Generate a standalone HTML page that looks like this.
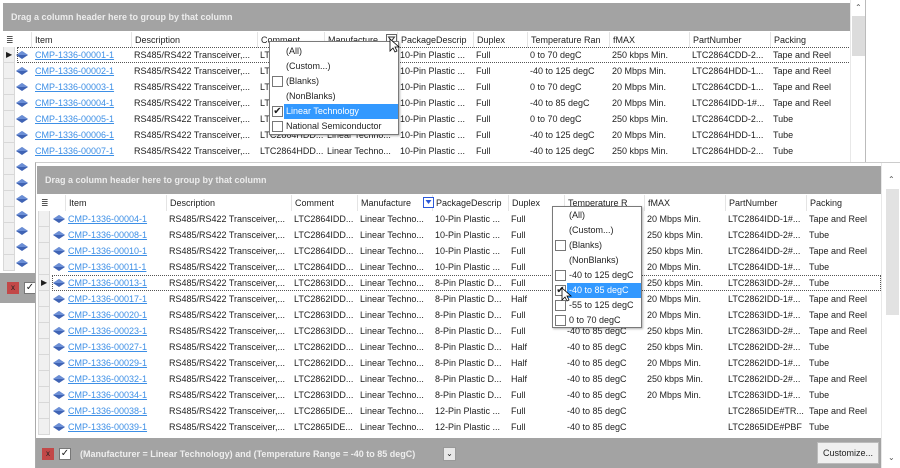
<!DOCTYPE html>
<html><head><meta charset="utf-8"><style>
*{margin:0;padding:0;box-sizing:border-box}
body{width:900px;height:468px;background:#fff;position:relative;overflow:hidden;font-family:"Liberation Sans",sans-serif;font-size:9px;color:#1e1e1e}
.w{position:absolute;background:#fff;overflow:hidden}
.gp{position:absolute;background:#a3a3a3;color:#ececec;font-weight:bold;font-size:9px;padding-left:8px}
.hd,.r{position:absolute;left:0;right:0;height:16px;line-height:16px;white-space:nowrap}
.hd span,.r span,.r a{position:absolute;top:0}
.hd span{border-left:1px solid #e4e4e4;padding-left:3px;height:16px}
.r a{color:#3d8fe6;text-decoration:underline}
.ri{position:absolute;width:12px;height:16px;background:#f0f0f0;border:1px solid #d8d8d8;border-top:none}
.d{position:absolute;top:4px;width:12px;height:8px}
.ft{position:absolute;background:#a3a3a3}
.sb{position:absolute;background:#fff;border-left:1px solid #e8e8e8}
.pop{position:absolute;background:#fff;border:1px solid #7a7a7a;box-shadow:1px 1px 2px rgba(0,0,0,.3)}
.pop div{position:absolute;left:0;right:0;height:15px;line-height:15px;white-space:nowrap}
.pop .cb{position:absolute;width:11px;height:11px;border:1px solid #777;background:#fff;top:2px}
.sel{position:absolute;border:1px dotted #555}
</style></head><body>

<!-- BACK WINDOW -->
<div class="w" style="left:0;top:0;width:866px;height:303px;border-right:1px solid #bbb">
 <div class="gp" style="left:3px;top:3px;width:847px;height:28px;line-height:28px">Drag a column header here to group by that column</div>
 <div class="hd" style="top:32px;width:850px">
  <span style="left:3px;border:none;color:#555">&#8803;</span>
  <span style="left:31px">Item</span><span style="left:131px">Description</span><span style="left:257px">Comment</span><span style="left:324px">Manufacture</span><span style="left:397px">PackageDescrip</span><span style="left:473px">Duplex</span><span style="left:527px">Temperature Ran</span><span style="left:609px">fMAX</span><span style="left:689px">PartNumber</span><span style="left:770px">Packing</span>
 </div>
 <svg style="position:absolute;left:386px;top:34px" width="11" height="11"><rect x=".5" y=".5" width="10" height="10" fill="#fff" stroke="#666"/><path d="M2.5 3h6l-3 4z" fill="none" stroke="#333"/></svg>
 <div id="bk"></div>
 <div class="ft" style="left:0;top:273px;width:866px;height:30px">
  <div style="position:absolute;left:7px;top:9px;width:12px;height:12px;background:#c24848;color:#222;font-size:8px;text-align:center;line-height:12px">x</div>
  <div style="position:absolute;left:24px;top:9px;width:12px;height:12px;background:#fff;border:1px solid #777;font-size:10px;line-height:10px;text-align:center">&#10003;</div>
 </div>
 <div class="sb" style="left:850px;top:0;width:16px;height:162px"><div style="position:absolute;top:3px;left:4px;color:#555;font-size:8px">&#8963;</div><div style="position:absolute;top:16px;left:1px;width:13px;height:40px;background:#dcdcdc"></div></div>
</div>

<!-- BACK POPUP -->
<div class="pop" style="left:269px;top:41px;width:130px;height:94px">
 <div style="top:2px;padding-left:16px">(All)</div>
 <div style="top:17px;padding-left:16px">(Custom...)</div>
 <div style="top:32px;padding-left:16px"><i class="cb" style="left:2px"></i>(Blanks)</div>
 <div style="top:47px;padding-left:16px">(NonBlanks)</div>
 <div style="top:62px;padding-left:16px"><i class="cb" style="left:2px;font-style:normal;font-size:10px;line-height:9px;text-align:center">&#10004;</i><span style="display:block;background:#3399ff;color:#fff;padding-left:2px;margin-left:-2px">Linear Technology</span></div>
 <div style="top:77px;padding-left:16px"><i class="cb" style="left:2px"></i>National Semiconductor</div>
</div>
<svg style="position:absolute;left:389px;top:38px" width="12" height="16"><path d="M1 1v12l3-3 2 4 2-1-2-4h4z" fill="#fff" stroke="#000" stroke-width=".8"/></svg>

<!-- FRONT WINDOW -->
<div class="w" style="left:35px;top:162px;width:865px;height:306px;border-left:1px solid #aaa;border-top:1px solid #ccc">
 <div class="gp" style="left:1px;top:3px;width:844px;height:28px;line-height:28px">Drag a column header here to group by that column</div>
 <div class="hd" style="top:32px;width:845px">
  <span style="left:2px;border:none;color:#555">&#8803;</span>
  <span style="left:29px">Item</span><span style="left:130px">Description</span><span style="left:255px">Comment</span><span style="left:321px">Manufacture</span><span style="left:396px">PackageDescrip</span><span style="left:472px">Duplex</span><span style="left:528px">Temperature R</span><span style="left:608px">fMAX</span><span style="left:689px">PartNumber</span><span style="left:770px">Packing</span>
 </div>
 <svg style="position:absolute;left:387px;top:34px" width="11" height="11"><rect x=".5" y=".5" width="10" height="10" fill="#fff" stroke="#2b58d8"/><path d="M2.5 3h6l-3 4z" fill="#2b58d8"/></svg>
 <div id="fr"></div>
 <div class="ft" style="left:0;top:275px;width:845px;height:31px">
  <div style="position:absolute;left:6px;top:10px;width:12px;height:12px;background:#c24848;color:#222;font-size:8px;text-align:center;line-height:12px">x</div>
  <div style="position:absolute;left:23px;top:10px;width:12px;height:12px;background:#fff;border:1px solid #777;font-size:10px;line-height:10px;text-align:center">&#10003;</div>
  <div style="position:absolute;left:44px;top:10px;color:#eee;font-weight:bold;font-size:9px;line-height:12px">(Manufacturer = Linear Technology) and (Temperature Range = -40 to 85 degC)</div>
  <div style="position:absolute;left:407px;top:9px;width:13px;height:14px;background:#e8e8e8;border:1px solid #999;font-size:8px;text-align:center;line-height:12px">&#8964;</div>
  <div style="position:absolute;left:781px;top:4px;width:62px;height:22px;background:#f0f0f0;border:1px solid #bbb;text-align:center;line-height:20px;font-size:9px">Customize...</div>
 </div>
 <div class="sb" style="left:845px;top:0;width:20px;height:306px"><div style="position:absolute;top:12px;left:6px;color:#555;font-size:8px">&#8963;</div><div style="position:absolute;top:26px;left:4px;width:13px;height:126px;background:#e2e2e2"></div><div style="position:absolute;top:290px;left:6px;color:#555;font-size:8px">&#8964;</div></div>
</div>

<!-- FRONT POPUP -->
<div class="pop" style="left:552px;top:206px;width:90px;height:122px">
 <div style="top:1px;padding-left:16px">(All)</div>
 <div style="top:16px;padding-left:16px">(Custom...)</div>
 <div style="top:31px;padding-left:16px"><i class="cb" style="left:2px"></i>(Blanks)</div>
 <div style="top:46px;padding-left:16px">(NonBlanks)</div>
 <div style="top:61px;padding-left:16px"><i class="cb" style="left:2px"></i>-40 to 125 degC</div>
 <div style="top:76px;padding-left:16px"><i class="cb" style="left:2px;font-style:normal;font-size:10px;line-height:9px;text-align:center">&#10004;</i><span style="display:block;background:#3399ff;color:#fff;padding-left:2px;margin-left:-2px">-40 to 85 degC</span></div>
 <div style="top:91px;padding-left:16px"><i class="cb" style="left:2px"></i>-55 to 125 degC</div>
 <div style="top:106px;padding-left:16px"><i class="cb" style="left:2px"></i>0 to 70 degC</div>
</div>
<svg style="position:absolute;left:561px;top:287px" width="12" height="16"><path d="M1 1v12l3-3 2 4 2-1-2-4h4z" fill="#fff" stroke="#000" stroke-width=".8"/></svg>

<script>
function dia(){return '<svg class="d" viewBox="0 0 12 8"><path d="M6 0L12 4 6 8 0 4z" fill="#3f63b4"/><path d="M6 0L12 4H0z" fill="#6c8fd6"/></svg>';}
function rows(el,top,cols,data,ri,sel,extra){
 var h='';
 data.forEach(function(d,i){
  var y=top+i*16;
  h+='<div class="ri" style="left:'+ri+'px;top:'+y+'px">'+(i==sel?'<span style="position:absolute;left:2px;top:0;font-size:8px;line-height:15px">&#9654;</span>':'')+'</div>';
  h+='<div class="r" style="top:'+y+'px"><span style="left:'+cols[0]+'px">'+dia()+'</span><a style="left:'+cols[1]+'px">CMP-1336-'+d[0]+'-1</a>';
  for(var k=1;k<d.length;k++) h+='<span style="left:'+cols[k+1]+'px">'+d[k]+'</span>';
  h+='</div>';
  if(i==sel) h+='<div class="sel" style="left:'+(ri+14)+'px;top:'+y+'px;width:'+extra+'px;height:16px"></div>';
 });
 document.getElementById(el).outerHTML=h;
}
var D='RS485/RS422 Transceiver,...',L='Linear Techno...',P10='10-Pin Plastic ...',P8='8-Pin Plastic D...',P12='12-Pin Plastic ...',T='-40 to 85 degC';
rows('bk',47,[16,35,134,260,327,400,476,530,612,692,773],[
 ['00001',D,'LTC2864CDD...',L,P10,'Full','0 to 70 degC','250 kbps Min.','LTC2864CDD-2...','Tape and Reel'],
 ['00002',D,'LTC2864HDD...',L,P10,'Full','-40 to 125 degC','20 Mbps Min.','LTC2864HDD-1...','Tape and Reel'],
 ['00003',D,'LTC2864CDD...',L,P10,'Full','0 to 70 degC','20 Mbps Min.','LTC2864CDD-1...','Tape and Reel'],
 ['00004',D,'LTC2864IDD...',L,P10,'Full','-40 to 85 degC','20 Mbps Min.','LTC2864IDD-1#...','Tape and Reel'],
 ['00005',D,'LTC2864CDD...',L,P10,'Full','0 to 70 degC','250 kbps Min.','LTC2864CDD-2...','Tube'],
 ['00006',D,'LTC2864HDD...',L,P10,'Full','-40 to 125 degC','20 Mbps Min.','LTC2864HDD-1...','Tube'],
 ['00007',D,'LTC2864HDD...',L,P10,'Full','-40 to 125 degC','250 kbps Min.','LTC2864HDD-2...','Tube'],
 ['00008',D],['00009',D],['00010',D],['00011',D],['00012',D],['00013',D],['00014',D]
],3,0,860);
rows('fr',48,[17,32,133,258,324,399,475,531,611,692,773],[
 ['00004',D,'LTC2864IDD...',L,P10,'Full',T,'20 Mbps Min.','LTC2864IDD-1#...','Tape and Reel'],
 ['00008',D,'LTC2864IDD...',L,P10,'Full',T,'250 kbps Min.','LTC2864IDD-2#...','Tube'],
 ['00010',D,'LTC2864IDD...',L,P10,'Full',T,'250 kbps Min.','LTC2864IDD-2#...','Tape and Reel'],
 ['00011',D,'LTC2864IDD...',L,P10,'Full',T,'20 Mbps Min.','LTC2864IDD-1#...','Tube'],
 ['00013',D,'LTC2863IDD...',L,P8,'Full',T,'250 kbps Min.','LTC2863IDD-2#...','Tube'],
 ['00017',D,'LTC2862IDD...',L,P8,'Half',T,'20 Mbps Min.','LTC2862IDD-1#...','Tape and Reel'],
 ['00020',D,'LTC2863IDD...',L,P8,'Full',T,'20 Mbps Min.','LTC2863IDD-1#...','Tape and Reel'],
 ['00023',D,'LTC2863IDD...',L,P8,'Full',T,'250 kbps Min.','LTC2863IDD-2#...','Tape and Reel'],
 ['00027',D,'LTC2862IDD...',L,P8,'Half',T,'250 kbps Min.','LTC2862IDD-2#...','Tube'],
 ['00029',D,'LTC2862IDD...',L,P8,'Half',T,'20 Mbps Min.','LTC2862IDD-1#...','Tube'],
 ['00032',D,'LTC2862IDD...',L,P8,'Half',T,'250 kbps Min.','LTC2862IDD-2#...','Tape and Reel'],
 ['00034',D,'LTC2863IDD...',L,P8,'Full',T,'20 Mbps Min.','LTC2863IDD-1#...','Tube'],
 ['00038',D,'LTC2865IDE...',L,P12,'Full',T,'','LTC2865IDE#TR...','Tape and Reel'],
 ['00039',D,'LTC2865IDE...',L,P12,'Full',T,'','LTC2865IDE#PBF','Tube']
],2,4,829);
</script>
</body></html>
